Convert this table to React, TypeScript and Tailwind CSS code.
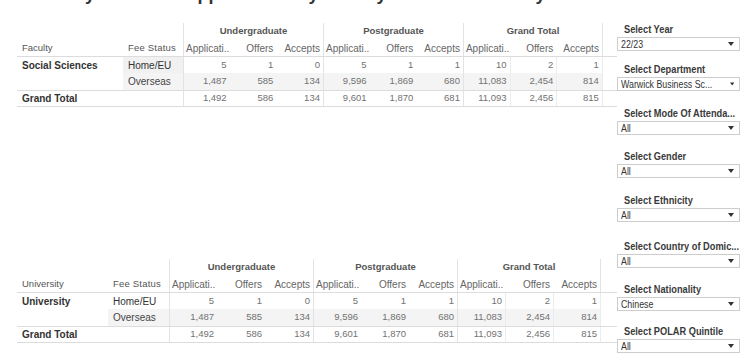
import React from "react";

const rowsData = {
  home: ["5", "1", "0", "5", "1", "1", "10", "2", "1"],
  over: ["1,487", "585", "134", "9,596", "1,869", "680", "11,083", "2,454", "814"],
  total: ["1,492", "586", "134", "9,601", "1,870", "681", "11,093", "2,456", "815"],
};

const headers = ["Applicati..", "Offers", "Accepts"];

type TableProps = {
  c1: number;
  c2: number;
  cw: number;
  dimLabel: string;
  groupLabel: string;
  homeGray: boolean;
};

function cellBorder(i: number, body: boolean) {
  const cls: string[] = [];
  if (i === 0 || i === 3 || i === 6) cls.push("border-l border-[#e3e3e3]");
  else if (body && (i === 7 || i === 8)) cls.push("border-l border-[#ececec]");
  if (i === 8) cls.push("border-r border-[#e3e3e3]");
  return cls.join(" ");
}

function DataRow({ vals, cw, bg }: { vals: string[]; cw: number; bg: string }) {
  return (
    <>
      {vals.map((v, i) => (
        <div
          key={i}
          className={`h-full flex items-center justify-end pr-[3px] text-[9.5px] text-[#727272] ${bg} ${cellBorder(i, true)}`}
          style={{ width: cw }}
        >
          {v}
        </div>
      ))}
    </>
  );
}

function Table({ c1, c2, cw, dimLabel, groupLabel, homeGray }: TableProps) {
  const block = cw * 3;
  return (
    <div className="ml-[17px] flex flex-col font-['Liberation_Sans',Arial,sans-serif]">
      <div className="flex h-[17px]">
        <div style={{ width: c1 + c2 }} />
        {["Undergraduate", "Postgraduate", "Grand Total"].map((g, i) => (
          <div
            key={g}
            className={`flex items-center justify-center text-[9.5px] font-bold text-[#555] border-l border-[#e3e3e3] ${i === 2 ? "border-r" : ""}`}
            style={{ width: block }}
          >
            {g}
          </div>
        ))}
      </div>
      <div className="flex h-[17px] border-b border-[#dcdcdc]">
        <div className="flex items-center pl-[5px] text-[9.5px] text-[#555]" style={{ width: c1 }}>
          {dimLabel}
        </div>
        <div className="flex items-center pl-[5px] text-[9.5px] text-[#555] tracking-[0.2px]" style={{ width: c2 }}>
          Fee Status
        </div>
        {Array.from({ length: 9 }).map((_, i) => {
          const h = headers[i % 3];
          return (
            <div
              key={i}
              className={`flex items-center text-[10px] text-[#666] whitespace-nowrap ${i % 3 === 0 ? "justify-start pl-[2px]" : "justify-end pr-[3px]"} ${cellBorder(i, false)}`}
              style={{ width: cw }}
            >
              {h}
            </div>
          );
        })}
      </div>
      <div className="flex h-[16px]">
        <div className="flex items-center pl-[5px] text-[10px] font-bold text-[#333]" style={{ width: c1 }}>
          {groupLabel}
        </div>
        <div
          className={`flex items-center pl-[5px] text-[10px] text-[#333] ${homeGray ? "bg-[#f1f1f1]" : ""}`}
          style={{ width: c2 }}
        >
          Home/EU
        </div>
        <DataRow vals={rowsData.home} cw={cw} bg="" />
      </div>
      <div className="flex h-[17px]">
        <div style={{ width: c1 }} />
        <div className="flex items-center pl-[5px] text-[10px] text-[#444] bg-[#f4f4f4]" style={{ width: c2 }}>
          Overseas
        </div>
        <DataRow vals={rowsData.over} cw={cw} bg="bg-[#f4f4f4]" />
      </div>
      <div className="flex h-[17px] border-y border-[#dcdcdc]">
        <div className="flex items-center pl-[5px] text-[10px] font-bold text-[#333]" style={{ width: c1 + c2 }}>
          Grand Total
        </div>
        <DataRow vals={rowsData.total} cw={cw} bg="" />
      </div>
    </div>
  );
}

function Arrow() {
  return (
    <svg width="6" height="4" viewBox="0 0 6 4">
      <path d="M0 0 L6 0 L3 4 Z" fill="#333" />
    </svg>
  );
}

const filters: { label: string; value: string; mt: string }[] = [
  { label: "Select Year", value: "22/23", mt: "mt-[22px]" },
  { label: "Select Department", value: "Warwick Business Sc...", mt: "mt-[11px]" },
  { label: "Select Mode Of Attenda...", value: "All", mt: "mt-[15px]" },
  { label: "Select Gender", value: "All", mt: "mt-[14px]" },
  { label: "Select Ethnicity", value: "All", mt: "mt-[15px]" },
  { label: "Select Country of Domic...", value: "All", mt: "mt-[17px]" },
  { label: "Select Nationality", value: "Chinese", mt: "mt-[14px]" },
  { label: "Select POLAR Quintile", value: "All", mt: "mt-[13px]" },
];

export default function App() {
  return (
    <div className="w-[755px] h-[362px] bg-white overflow-hidden flex">
      <div className="w-[617px] flex flex-col">
        <div className="h-[6px] overflow-hidden pl-[32px]">
          <div className="-mt-[15px] text-[18px] leading-[18px] font-bold text-[#333] whitespace-nowrap font-['Liberation_Sans',Arial,sans-serif]">
            Faculty Overview Applications by Faculty and Fee Status by Level
          </div>
        </div>
        <div className="mt-[17px]">
          <Table c1={106} c2={60} cw={46.67} dimLabel="Faculty" groupLabel="Social Sciences" homeGray />
        </div>
        <div className="mt-[152px]">
          <Table c1={91} c2={61} cw={48} dimLabel="University" groupLabel="University" homeGray={false} />
        </div>
      </div>
      <div className="w-[123px] flex flex-col font-['Liberation_Sans',Arial,sans-serif]">
        {filters.map((f) => (
          <div key={f.label} className={`${f.mt} flex flex-col`}>
            <div className="h-[14px] leading-[14px] text-[11px] font-bold text-[#3a3a3a] whitespace-nowrap pl-[7px]">
              <span className="inline-block origin-left scale-x-[0.84]">{f.label}</span>
            </div>
            <div className="mt-[1px] h-[14px] border border-[#cdcdcd] bg-white flex items-center justify-between pl-[3px] pr-[5px]">
              <span className="inline-block origin-left scale-x-[0.84] text-[10.5px] leading-[12px] text-[#333] whitespace-nowrap">
                {f.value}
              </span>
              <Arrow />
            </div>
          </div>
        ))}
      </div>
    </div>
  );
}
